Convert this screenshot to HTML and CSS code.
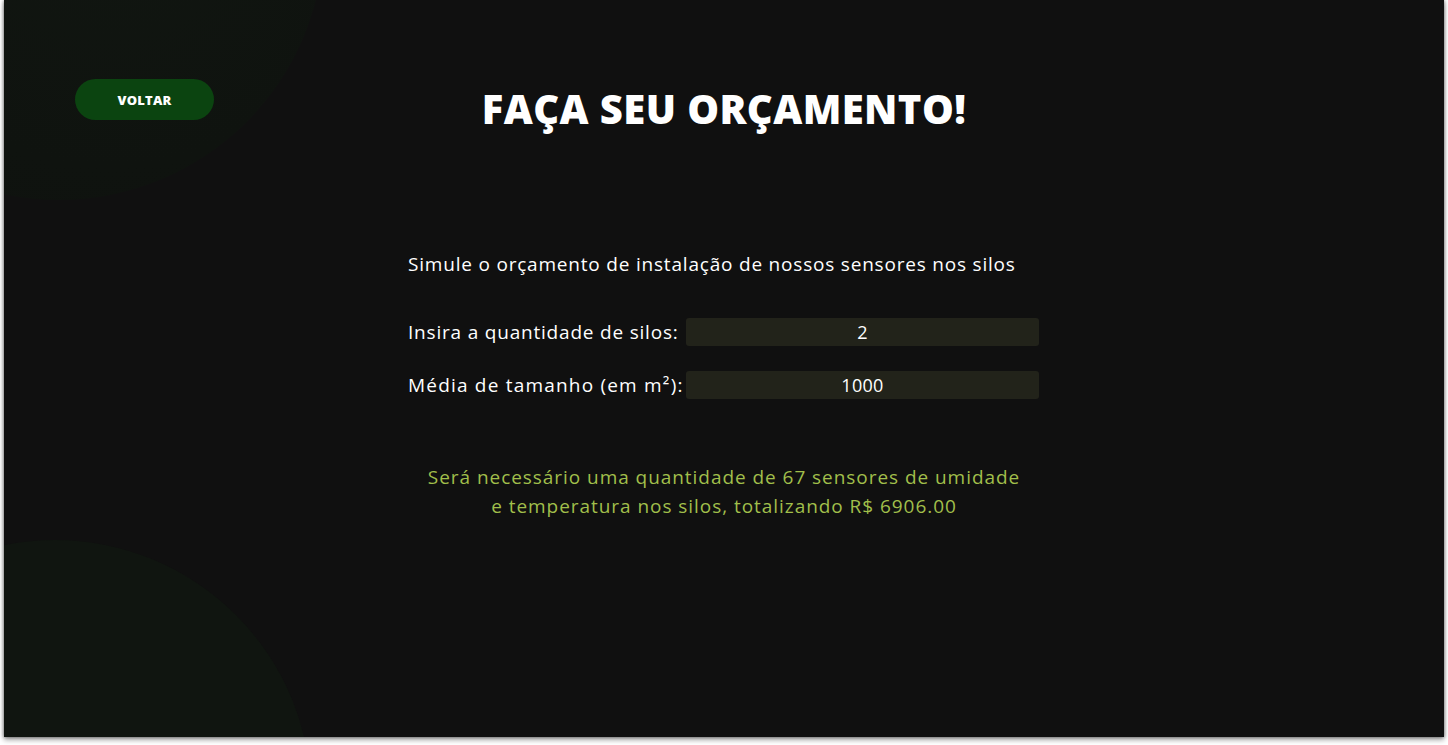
FILE: index.html
```html
<!DOCTYPE html>
<html lang="pt-BR">
<head>
<meta charset="utf-8">
<title>Faça seu orçamento</title>
<link rel="stylesheet" href="styles.css">
</head>
<body>
<main class="screen">
  <div class="blob blob-top"></div>
  <div class="blob blob-bottom"></div>
  <header class="top">
    <div class="top-left"><button class="back">VOLTAR</button></div>
    <h1 class="title">FAÇA SEU ORÇAMENTO!</h1>
    <div class="top-right"></div>
  </header>
  <section class="sim">
    <p class="intro">Simule o orçamento de instalação de nossos sensores nos silos</p>
    <div class="fields">
      <label class="row">
        <span class="label">Insira a quantidade de silos:</span>
        <input class="field" type="text" value="2">
      </label>
      <label class="row">
        <span class="label label-wide">Média de tamanho (em m²):</span>
        <input class="field" type="text" value="1000">
      </label>
    </div>
    <p class="result">Será necessário uma quantidade de 67 sensores de umidade<br>e temperatura nos silos, totalizando R$ 6906.00</p>
  </section>
</main>
</body>
</html>
```
FILE: styles.css
```css
* { box-sizing: border-box; }
html, body { margin: 0; padding: 0; }
body {
  background: #ffffff;
  font-family: "Open Sans", "Liberation Sans", sans-serif;
  width: 1448px;
  height: 745px;
  overflow: hidden;
}
.screen {
  position: relative;
  width: 1440px;
  height: 737px;
  margin-left: 4px;
  background: #101010;
  overflow: hidden;
  box-shadow: 0 3px 5px rgba(0,0,0,0.35), -1px 0 3px rgba(0,0,0,0.25), 1px 0 3px rgba(0,0,0,0.25);
}
.blob {
  position: absolute;
  border-radius: 50%;
  pointer-events: none;
}
.blob-top {
  left: -210px;
  top: -330px;
  width: 530px;
  height: 530px;
  background: radial-gradient(circle at 60% 45%, #111611 0%, #0f130f 60%, #0e110e 100%);
}
.blob-bottom {
  left: -205px;
  top: 540px;
  width: 512px;
  height: 512px;
  background: #101510;
}
.top {
  position: relative;
  display: grid;
  grid-template-columns: 1fr auto 1fr;
  align-items: start;
  padding-top: 79px;
}
.top-left { padding-left: 71px; }
.back {
  width: 139px;
  height: 41px;
  border: 0;
  border-radius: 21px;
  background: #0b4410;
  color: #ffffff;
  font-family: inherit;
  font-weight: 800;
  font-size: 13px;
  letter-spacing: 0.2px;
  cursor: pointer;
}
.title {
  margin: 6px 0 0;
  font-size: 40px;
  line-height: 48px;
  font-weight: 800;
  color: #ffffff;
  letter-spacing: 0.4px;
}
.sim {
  position: relative;
  width: 632px;
  margin: 118px auto 0 404px;
  color: #ffffff;
  font-size: 19px;
  letter-spacing: 0.8px;
}
.intro {
  margin: 0;
  line-height: 27px;
}
.fields {
  display: flex;
  flex-direction: column;
  gap: 25px;
  margin-top: 40px;
}
.row {
  display: flex;
  align-items: center;
  height: 28px;
}
.label {
  width: 278px;
  line-height: 28px;
  white-space: nowrap;
}
.label-wide { letter-spacing: 1.2px; }
.field {
  width: 353px;
  height: 28px;
  border: 0;
  border-radius: 3px;
  background: #22231a;
  color: #ffffff;
  text-align: center;
  font-family: inherit;
  font-size: 18px;
  letter-spacing: 0.3px;
  padding: 0;
  outline: none;
}
.result {
  margin: 64px 0 0;
  text-align: center;
  color: #a1bf4b;
  line-height: 29px;
  letter-spacing: 0.95px;
}
```
